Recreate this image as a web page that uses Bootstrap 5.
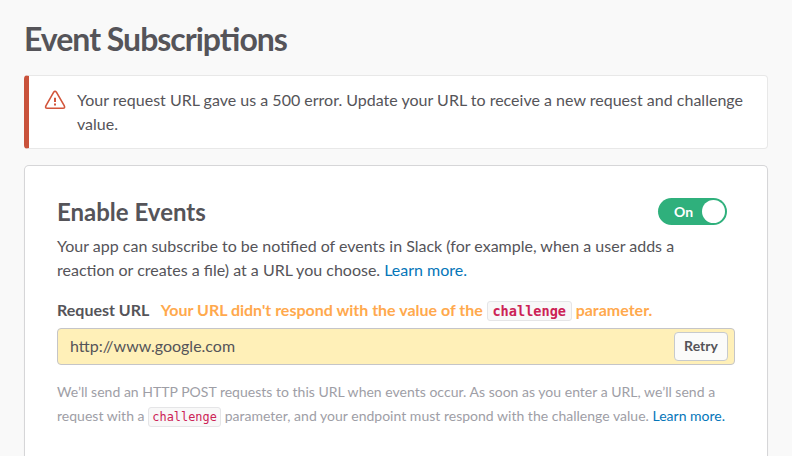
<!DOCTYPE html>
<html lang="en">
<head>
<meta charset="utf-8">
<meta name="viewport" content="width=device-width, initial-scale=1">
<title>Event Subscriptions</title>
<link href="https://cdn.jsdelivr.net/npm/bootstrap@5.3.0/dist/css/bootstrap.min.css" rel="stylesheet">
<style>
body{font-family:Lato,sans-serif;font-size:16px;line-height:24px;color:#555459;background:#f9f9f9}
main{height:456px;padding-top:19px}
.page-title{font-size:32px;line-height:40px;font-weight:700;letter-spacing:-1px;font-feature-settings:"liga" 1;margin-bottom:16px}
.error-note{border:1px solid #e8e8e8;border-left:5px solid #c9523b;border-radius:4px;padding:12px 16px 12px 14px;height:74px;margin-bottom:16px}
.error-text{letter-spacing:.008px;font-feature-settings:"liga" 1}
.panel{border:1px solid #d6d6d8;border-bottom:0;border-radius:5px 5px 0 0;padding:32px 32px 0;height:291px;box-shadow:0 1px 1px rgba(0,0,0,.08)}
.panel-title{font-size:24px;line-height:28px;font-weight:700;margin-bottom:8px}
a{color:#0576b9;text-decoration:none}
.toggle{width:69px;height:27px;background:#2fb07c;margin-right:8px;font-size:14px;padding:0 2px 0 16px;border:0}
.knob{width:23px;height:23px}
.label-row{margin-bottom:6px;height:24px}
.warn{color:#ffa94d}
code{display:inline-block;font-family:"DejaVu Sans Mono",monospace;line-height:14px;color:#c25;background:#f8f8f8;border:1px solid #e5e5e7;border-radius:3px;padding:2px 3.2px;font-size:11.9px}
.warn code{font-size:13.6px;padding:2px 4.7px}
.url-box{height:37px;background:#fff0b8;border:1px solid #c5c5c8;border-radius:4px;padding:0 6px 1px 12px;width:678px}
.retry{height:29px;width:54px;background:#fbfbfa;border:1px solid #c7cacd;border-radius:4px;font-size:14px;font-weight:700;color:#555459;padding:0 0 1px}
.hint{font-size:14px;color:#9e9ea6;margin:15px 0 0;letter-spacing:.014px;font-feature-settings:"liga" 1}
</style>
<script src="https://cdn.jsdelivr.net/npm/bootstrap@5.3.0/dist/js/bootstrap.bundle.min.js"></script>
</head>
<body>
<main class="px-4 overflow-hidden">
<h1 class="page-title">Event Subscriptions</h1>
<div class="error-note bg-white d-flex">
<svg class="flex-shrink-0 me-2" width="26" height="24" viewBox="0 0 26 24" fill="none" stroke="#d2553b" stroke-width="1.6" stroke-linejoin="round" stroke-linecap="round"><path d="M10.7 4.2 3 17.6Q1.8 20.2 4.2 20.2H20Q22.4 20.2 21.2 17.6L13.4 4.2Q12 2.4 10.7 4.2Z"/><path d="M12 9.8v4.2M12 15.6v1.8" stroke-width="2" stroke-linecap="butt"/></svg>
<div class="error-text">Your request URL gave us a 500 error. Update your URL to receive a new request and challenge value.</div>
</div>
<section class="panel bg-white">
<div class="d-flex justify-content-between align-items-start"><h2 class="panel-title">Enable Events</h2>
<button class="toggle rounded-pill text-white fw-bold d-flex align-items-center justify-content-between">On<span class="knob rounded-circle bg-white"></span></button></div>
<p class="mb-3">Your app can subscribe to be notified of events in Slack (for example, when a user adds a<br>reaction or creates a file) at a URL you choose. <a href="#">Learn more.</a></p>
<div class="label-row fw-bold">Request URL <span class="warn ms-2">Your URL didn't respond with the value of the <code>challenge</code> parameter.</span></div>
<div class="url-box d-flex align-items-center justify-content-between"><span>http://www.google.com</span><button class="retry">Retry</button></div>
<p class="hint">We’ll send an HTTP POST requests to this URL when events occur. As soon as you enter a URL, we’ll send a<br>request with a <code>challenge</code> parameter, and your endpoint must respond with the challenge value. <a href="#">Learn more.</a></p>
</section>
</main>
</body>
</html>
